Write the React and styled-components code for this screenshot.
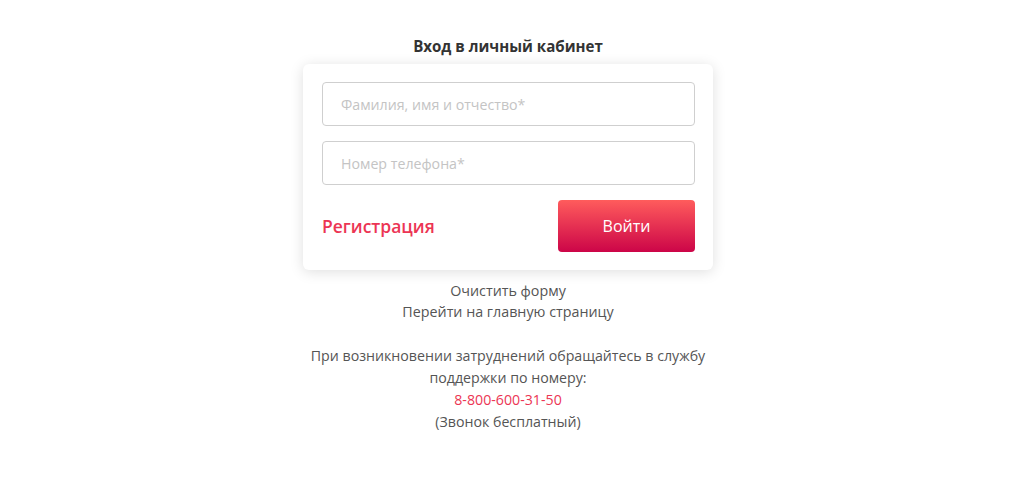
import React from "react";
import styled, { createGlobalStyle } from "styled-components";

const GlobalStyle = createGlobalStyle`
  body {
    margin: 0;
    background: #ffffff;
    font-family: "Open Sans", "Noto Sans", sans-serif;
  }
`;

function App() {
  return (
    <>
      <GlobalStyle />
      <Page>
        <Title>Вход в личный кабинет</Title>
        <Card>
          <Input placeholder="Фамилия, имя и отчество*" />
          <Input placeholder="Номер телефона*" />
          <Actions>
            <RegisterLink href="#">Регистрация</RegisterLink>
            <LoginButton type="button">Войти</LoginButton>
          </Actions>
        </Card>
        <Links>
          <TextLink href="#">Очистить форму</TextLink>
          <TextLink href="#">Перейти на главную страницу</TextLink>
        </Links>
        <Support>
          При возникновении затруднений обращайтесь в службу поддержки по номеру:
          <Phone href="#">8-800-600-31-50</Phone>
          (Звонок бесплатный)
        </Support>
      </Page>
    </>
  );
}

const Page = styled.div`
  display: flex;
  flex-direction: column;
  align-items: center;
  padding: 36px 8px 0 0;
`;

const Title = styled.h1`
  margin: 0 0 8px;
  font-size: 15.1px;
  line-height: 20px;
  font-weight: 700;
  color: #333333;
`;

const Card = styled.div`
  box-sizing: border-box;
  width: 410px;
  padding: 18px 18px 18px 19px;
  background: #ffffff;
  border-radius: 6px;
  box-shadow: 0 2px 14px rgba(0, 0, 0, 0.13);
  display: flex;
  flex-direction: column;
  gap: 15px;
`;

const Input = styled.input`
  box-sizing: border-box;
  width: 373px;
  height: 44px;
  padding: 0 18px;
  border: 1px solid #cfcfcf;
  border-radius: 4px;
  font-family: inherit;
  font-size: 14.2px;
  color: #333333;
  outline: none;
  &::placeholder {
    color: #c4c4c4;
  }
`;

const Actions = styled.div`
  display: flex;
  align-items: center;
  justify-content: space-between;
  width: 373px;
`;

const RegisterLink = styled.a`
  font-size: 17.5px;
  font-weight: 600;
  color: #ec3554;
  text-decoration: none;
`;

const LoginButton = styled.button`
  width: 137px;
  height: 52px;
  border: none;
  border-radius: 4px;
  background: linear-gradient(180deg, #ff5c5c 0%, #cc0548 100%);
  color: #ffffff;
  font-family: inherit;
  font-size: 16px;
  font-weight: 500;
  cursor: pointer;
`;

const Links = styled.div`
  display: flex;
  flex-direction: column;
  align-items: center;
  margin-top: 10px;
`;

const TextLink = styled.a`
  font-size: 14.3px;
  line-height: 21px;
  color: #555555;
  text-decoration: none;
`;

const Support = styled.p`
  width: 410px;
  margin: 23px 0 0;
  text-align: center;
  font-size: 14.2px;
  line-height: 22px;
  color: #555555;
`;

const Phone = styled.a`
  display: block;
  color: #ec3554;
  text-decoration: none;
`;

export default App;
